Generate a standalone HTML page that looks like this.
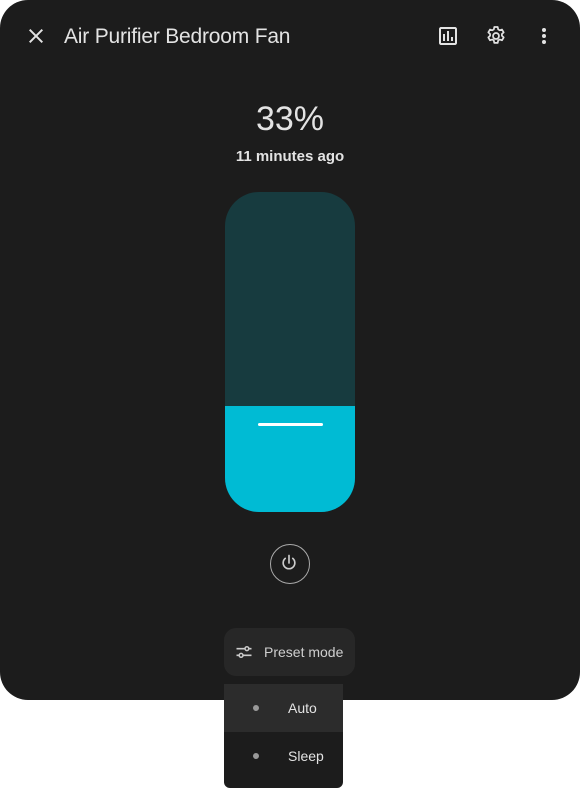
<!DOCTYPE html>
<html><head><style>
body{margin:0;width:580px;height:788px;background:#fff;position:relative;overflow:hidden;font-family:"Liberation Sans",Roboto,sans-serif;}
.dlg{position:absolute;left:0;top:0;width:580px;height:700px;background:#1c1c1c;border-radius:28px;}
.t{position:absolute;color:#e3e3e3;}
.menu{position:absolute;left:224px;top:682px;width:119px;height:106px;background:#1c1c1c;border-radius:0 0 6px 6px;}
</style></head><body>
<div class="dlg">
<svg style="position:absolute;left:24px;top:24px" width="24" height="24" viewBox="0 0 24 24"><path d="M19 6.41L17.59 5 12 10.59 6.41 5 5 6.41 10.59 12 5 17.59 6.41 19 12 13.41 17.59 19 19 17.59 13.41 12z" fill="#e3e3e3"/></svg>
<div class="t" style="left:64px;top:25px;font-size:21px;letter-spacing:-0.2px;">Air Purifier Bedroom Fan</div>
<svg style="position:absolute;left:436px;top:24px" width="24" height="24" viewBox="0 0 24 24"><path d="M19 3H5c-1.1 0-2 .9-2 2v14c0 1.1.9 2 2 2h14c1.1 0 2-.9 2-2V5c0-1.1-.9-2-2-2zm0 16H5V5h14v14zM7 10h2v7H7zm4-3h2v10h-2zm4 6h2v4h-2z" fill="#e3e3e3"/></svg>
<svg style="position:absolute;left:484px;top:24px" width="24" height="24" viewBox="0 0 24 24"><g fill="none" stroke="#e3e3e3" stroke-width="1.7" stroke-linejoin="round"><path d="M10.3 3h3.4l.5 2.4 1.5.9 2.3-.8 1.7 2.9-1.8 1.6v1.8l1.8 1.6-1.7 2.9-2.3-.8-1.5.9-.5 2.5h-3.4l-.5-2.5-1.5-.9-2.3.8-1.7-2.9 1.8-1.6v-1.8L4.3 8.4 6 5.5l2.3.8 1.5-.9z"/><circle cx="12" cy="12" r="3"/></g></svg>
<svg style="position:absolute;left:532px;top:24px" width="24" height="24" viewBox="0 0 24 24"><circle cx="12" cy="6" r="2" fill="#e3e3e3"/><circle cx="12" cy="12" r="2" fill="#e3e3e3"/><circle cx="12" cy="18" r="2" fill="#e3e3e3"/></svg>
<div class="t" style="left:0;width:580px;text-align:center;top:100px;font-size:34px;">33%</div>
<div class="t" style="left:0;width:580px;text-align:center;top:148px;font-size:15px;font-weight:bold;">11 minutes ago</div>
<div style="position:absolute;left:225px;top:192px;width:130px;height:320px;border-radius:34px;background:#173b3f;overflow:hidden;">
<div style="position:absolute;left:0;top:214px;width:130px;height:106px;background:#00bbd4;"></div>
<div style="position:absolute;left:33px;top:231px;width:65px;height:3px;background:#fff;border-radius:2px;"></div>
</div>
<div style="position:absolute;left:270px;top:544px;width:38px;height:38px;border:1px solid #aaa;border-radius:50%;"></div>
<svg style="position:absolute;left:279px;top:553px" width="20" height="20" viewBox="0 0 24 24"><path d="M12 3v9M7.5 6.5a7 7 0 109 0" fill="none" stroke="#ccc" stroke-width="2" stroke-linecap="round"/></svg>
<div style="position:absolute;left:224px;top:628px;width:131px;height:48px;background:#272727;border-radius:12px;"></div>
<svg style="position:absolute;left:234px;top:642px" width="20" height="20" viewBox="0 0 24 24"><path d="M3 8h10M18 8h3M3 16h3M11 16h10" stroke="#ccc" stroke-width="2"/><circle cx="15.5" cy="8" r="2.3" fill="none" stroke="#ccc" stroke-width="1.8"/><circle cx="8.5" cy="16" r="2.3" fill="none" stroke="#ccc" stroke-width="1.8"/></svg>
<div class="t" style="left:264px;top:644px;font-size:14px;color:#cfcfcf;">Preset mode</div>
</div>
<div class="menu">
<div style="position:absolute;left:0;top:2px;width:119px;height:48px;background:#2c2c2c;"></div>
<div style="position:absolute;left:29px;top:23px;width:6px;height:6px;border-radius:50%;background:#999;"></div>
<div class="t" style="left:64px;top:18px;font-size:14px;">Auto</div>
<div style="position:absolute;left:29px;top:71px;width:6px;height:6px;border-radius:50%;background:#999;"></div>
<div class="t" style="left:64px;top:66px;font-size:14px;">Sleep</div>
</div>
</body></html>
